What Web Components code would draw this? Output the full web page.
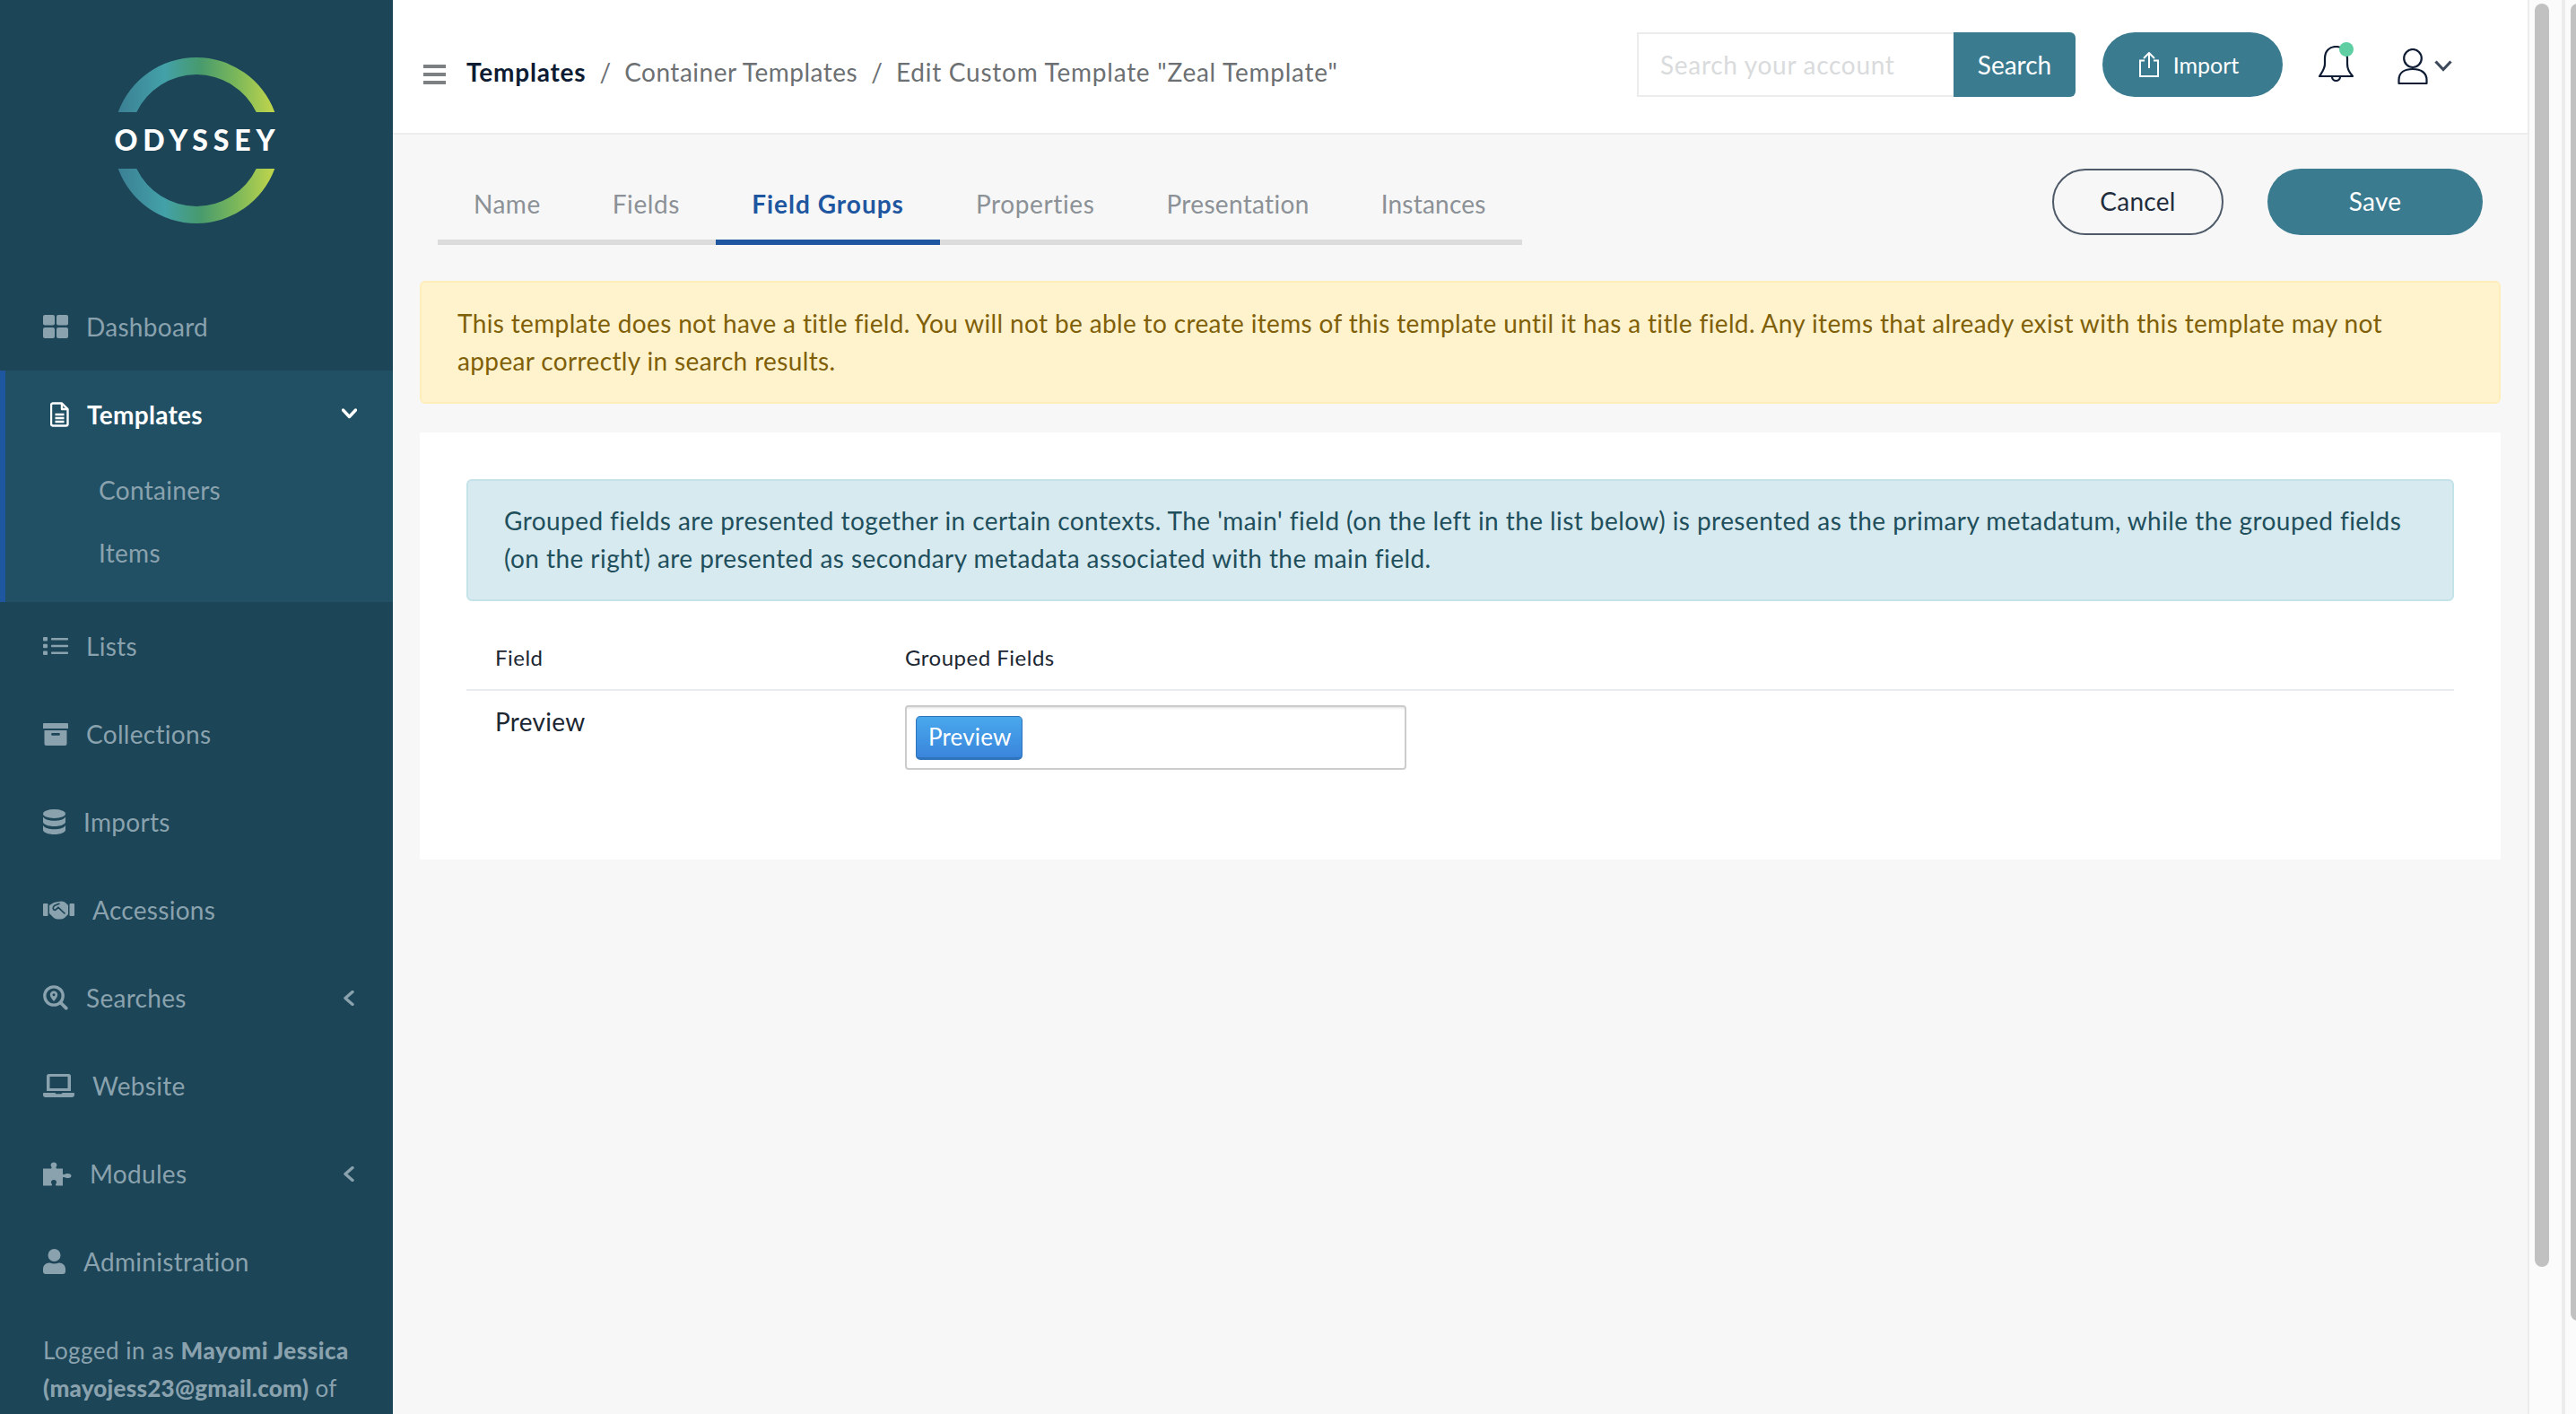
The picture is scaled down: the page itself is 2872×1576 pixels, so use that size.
<!DOCTYPE html>
<html>
<head>
<meta charset="utf-8">
<title>Odyssey</title>
<style>
    html, body{
        margin: 0;
        height: 100%;
        overflow: hidden;
        background: #f7f7f7;
        font-family: Lato, "Open Sans", sans-serif;
    }
    svg{ display: block; }
</style>
</head>
<body>
<app-shell>
    <side-bar slot="side">
        <nav-item>
            <svg slot="icon" width="28" height="26" viewBox="0 0 28 26" fill="currentColor"><rect width="13" height="11.500" rx="2"/><rect x="15" width="13" height="11.500" rx="2"/><rect y="14" width="13" height="12" rx="2"/><rect x="15" y="14" width="13" height="12" rx="2"/></svg>
            Dashboard
        </nav-item>
        <nav-group>
            <nav-item active caret="down">
                <svg slot="icon" style="margin-left:8px" width="21" height="28" viewBox="0 0 21 28" fill="none" stroke="currentColor" stroke-width="2.400" stroke-linejoin="round"><path d="M3 1.500h10l6.500 6.500v16.500a2 2 0 0 1-2 2H3a2 2 0 0 1-2-2v-21a2 2 0 0 1 2-2z"/><path d="M13 1.500v6.500h6.500M5.500 14h10M5.500 18h10M5.500 22h10"/></svg>
                Templates
            </nav-item>
            <sub-item>Containers</sub-item>
            <sub-item>Items</sub-item>
        </nav-group>
        <nav-item>
            <svg slot="icon" width="28" height="22" viewBox="0 0 28 22" fill="currentColor"><rect y="1" width="5" height="4.500" rx="1"/><rect y="8.700" width="5" height="4.500" rx="1"/><rect y="16.500" width="5" height="4.500" rx="1"/><rect x="9" y="2" width="19" height="2.600" rx=".8"/><rect x="9" y="9.700" width="19" height="2.600" rx=".8"/><rect x="9" y="17.500" width="19" height="2.600" rx=".8"/></svg>
            Lists
        </nav-item>
        <nav-item>
            <svg slot="icon" width="28" height="25" viewBox="0 0 28 25" fill="currentColor"><path d="M1 0h26a1 1 0 0 1 1 1v5H0V1a1 1 0 0 1 1-1z"/><path fill-rule="evenodd" d="M1.500 8h25v15a2 2 0 0 1-2 2h-21a2 2 0 0 1-2-2zM10.500 11a1 1 0 0 0 0 2.800h7a1 1 0 0 0 0-2.800z"/></svg>
            Collections
        </nav-item>
        <nav-item>
            <svg slot="icon" width="25" height="28" viewBox="0 0 25 28" fill="currentColor"><ellipse cx="12.500" cy="5" rx="12.500" ry="5"/><path d="M0 8.500c2 3 7 4.300 12.500 4.300S23 11.500 25 8.500V14c0 2.800-5.600 5-12.500 5S0 16.800 0 14z"/><path d="M0 18c2 3 7 4.300 12.500 4.300S23 21 25 18v5c0 2.800-5.600 5-12.500 5S0 25.800 0 23z"/></svg>
            Imports
        </nav-item>
        <nav-item>
            <svg slot="icon" width="35" height="21" viewBox="0 0 35 21" fill="currentColor"><rect y="3" width="5.500" height="14" rx="1"/><rect x="29.500" y="3" width="5.500" height="14" rx="1"/><path d="M7 5 12 2 17 1C20 0 24 0 27 4L28 5V15L24 19C21 21 15 21 12 19L7 14Z"/><path d="M18.500 3 12.500 5.500C10.500 7.500 11 10.500 13.500 10.500L17 7.500 24.500 14.500" fill="none" stroke="#1c4557" stroke-width="1.700"/></svg>
            Accessions
        </nav-item>
        <nav-item caret="left">
            <svg slot="icon" width="28" height="28" viewBox="0 0 28 28" fill="none" stroke="currentColor"><circle cx="12" cy="12" r="10.200" stroke-width="3.300"/><path fill="currentColor" stroke="none" fill-rule="evenodd" d="M12 18C9 14.500 7.800 12.800 7.800 10.800a4.200 4.200 0 0 1 8.400 0C16.200 12.800 15 14.500 12 18zM12 9.300a1.500 1.500 0 1 0 0 3 1.500 1.500 0 0 0 0-3z"/><path d="M20 20 25.700 25.700" stroke-width="3.800" stroke-linecap="round"/></svg>
            Searches
        </nav-item>
        <nav-item>
            <svg slot="icon" width="35" height="28" viewBox="0 0 35 28" fill="currentColor"><path fill-rule="evenodd" d="M6.500 1h22a2.500 2.500 0 0 1 2.500 2.500V20H4V3.500A2.500 2.500 0 0 1 6.500 1zM7.500 4v13h20V4z"/><path d="M.8 22h12.700c.3.800 1 1.300 1.800 1.300h4.400c.8 0 1.500-.5 1.800-1.300h12.700c.4 0 .8.400.8.800v1.500c0 1.500-1.200 2.700-2.800 2.700H2.800A2.800 2.800 0 0 1 0 24.300v-1.500c0-.4.400-.8.800-.8z"/></svg>
            Website
        </nav-item>
        <nav-item caret="left">
            <svg slot="icon" width="32" height="28" viewBox="0 0 32 28" fill="currentColor"><path d="M0 8.500h8.500c1.300 0 1.300-1.400.6-2.300-1-1.300-.6-4.700 2.900-4.700s3.900 3.400 2.900 4.700c-.7.900-.7 2.300.6 2.300H22v5.500c0 1 1.300 1.300 2.200.7 1.700-1.200 7.300-1.200 7.300 1.800s-5.600 3-7.300 1.800c-.9-.6-2.200-.3-2.200.7v8.500h-7c-1.400 0-1.200-1.400-.5-2.200 1.100-1.300.6-4.300-2.500-4.300s-3.600 3-2.500 4.300c.7.800.9 2.200-.5 2.200H0z"/></svg>
            Modules
        </nav-item>
        <nav-item>
            <svg slot="icon" width="25" height="28" viewBox="0 0 25 28" fill="currentColor"><circle cx="12.500" cy="7" r="7"/><path d="M7.500 15.500c3 1.300 7 1.300 10 0h.5c4 0 7 3 7 7V25a3 3 0 0 1-3 3H3a3 3 0 0 1-3-3v-2.500c0-4 3-7 7-7z"/></svg>
            Administration
        </nav-item>
        <user-note>Logged in as <b>Mayomi Jessica</b><br><b style="letter-spacing:.24px">(mayojess23@gmail.com)</b> of</user-note>
    </side-bar>

    <top-bar slot="top">
        <span slot="crumb-main">Templates</span>
        <span slot="crumb-a">Container Templates</span>
        <span slot="crumb-b">Edit Custom Template "Zeal Template"</span>
    </top-bar>

    <div slot="main" style="display:flex;flex-direction:column">
        <action-row>
            <tab-item style="letter-spacing:.5px">Name</tab-item>
            <tab-item>Fields</tab-item>
            <tab-item active>Field Groups</tab-item>
            <tab-item>Properties</tab-item>
            <tab-item style="letter-spacing:.32px">Presentation</tab-item>
            <tab-item style="letter-spacing:.22px">Instances</tab-item>
        </action-row>
        <alert-box kind="warning">This template does not have a title field. You will not be able to create items of this template until it has a title field. Any items that already exist with this template may not<br>appear correctly in search results.</alert-box>
        <group-card>
            <alert-box kind="info">Grouped fields are presented together in certain contexts. The 'main' field (on the left in the list below) is presented as the primary metadatum, while the grouped fields<br>(on the right) are presented as secondary metadata associated with the main field.</alert-box>
            <group-table>
                <span slot="field">Preview</span>
                <tag-chip slot="grouped">Preview</tag-chip>
            </group-table>
        </group-card>
    </div>
</app-shell>

<script>
// small helper so every element below reads the same
function makeTemplate(html){
    const t = document.createElement('template');
    t.innerHTML = html;
    return t;
}

function register(name, html){
    const tpl = makeTemplate(html);
    class Comp extends HTMLElement{
        constructor(){
            super();
            this.attachShadow({ mode: 'open' });
            this.shadowRoot.appendChild(tpl.content.cloneNode(true));
        }
    }
    window.customElements.define(name, Comp);
}

register('app-shell', `
    <style>
        :host{ display: flex; width: 2872px; height: 1576px; overflow: hidden; }
        .side{ width: 438px; flex: none; }
        .page{ flex: 1; min-width: 0; display: flex; flex-direction: column; background: #f7f7f7; }
        .bars{ width: 54px; flex: none; display: flex; background: #fbfbfb; }
        .bar{ flex: 1; border-left: 2px solid #ececec; padding: 4px 6px 0; }
        .bar:first-child{ padding-bottom: 164px; width: 26px; flex: none; box-sizing: content-box; padding-left: 6px; padding-right: 4px; }
        .bar:last-child{ border-left-width: 4px; padding: 4px 0 104px 6px; }
        .thumb{ height: 100%; background: #c1c1c1; border-radius: 8px; width: 16px; box-sizing: border-box; }
        .wrap{ display: flex; flex-direction: column; height: 1576px; box-sizing: border-box; }
    </style>
    <div class="side"><slot name="side"></slot></div>
    <div class="page">
        <slot name="top"></slot>
        <slot name="main"></slot>
    </div>
    <div class="bars">
        <div class="bar"><div class="wrap" style="height:1408px"><div class="thumb"></div></div></div>
        <div class="bar"><div class="wrap" style="height:1468px"><div class="thumb"></div></div></div>
    </div>
`);

register('side-bar', `
    <style>
        :host{ display: block; height: 1576px; overflow: hidden; background: #1c4557; font-family: Lato, sans-serif; }
        .logo{ height: 315px; display: flex; justify-content: center; padding-top: 60px; box-sizing: border-box; }
    </style>
    <div class="logo">
        <svg width="200" height="194" viewBox="0 0 200 194" style="overflow:visible">
            <defs>
                <linearGradient id="ring" x1="12" x2="188" y1="0" y2="0" gradientUnits="userSpaceOnUse">
                    <stop offset="0" stop-color="#3b7f94"/>
                    <stop offset=".3" stop-color="#43a1a8"/>
                    <stop offset=".52" stop-color="#479a6e"/>
                    <stop offset=".75" stop-color="#7ab75a"/>
                    <stop offset="1" stop-color="#c3d64b"/>
                </linearGradient>
            </defs>
            <path fill="url(#ring)" d="M12.700 65A93 93 0 0 1 187.300 65H166.700A74 74 0 0 0 33.300 65Z"/>
            <path fill="url(#ring)" d="M12.700 128A93 93 0 0 0 187.300 128H166.700A74 74 0 0 1 33.300 128Z"/>
            <text x="101" y="107.500" text-anchor="middle" fill="#fff" font-family="Lato, sans-serif" font-weight="900" font-size="32" letter-spacing="5.900">ODYSSEY</text>
        </svg>
    </div>
    <slot></slot>
`);

class NavItem extends HTMLElement{
    constructor(){
        super();
        this.attachShadow({ mode: 'open' });
        this.shadowRoot.innerHTML = `
            <style>
                :host{ display: flex; align-items: center; height: 98px; padding: 0 40px 0 48px; color: #8aa2ae; font-size: 28px; letter-spacing: .3px; box-sizing: border-box; }
                :host([active]){ color: #fff; font-weight: 700; padding-left: 42px; }
                .label{ flex: 1; margin-left: 20px; }
            </style>
            <slot name="icon"></slot>
            <span class="label"><slot></slot></span>
        `;
        const caret = this.getAttribute('caret');
        if(caret){
            const points = caret === 'down' ? '1.500,3 8.500,10.500 15.500,3' : '12,1.500 4,8.500 12,15.500';
            const holder = document.createElement('span');
            holder.innerHTML = `<svg viewBox="0 0 17 17" fill="none" stroke="${caret === 'down' ? '#fff' : '#8aa2ae'}" stroke-width="3.400" stroke-linecap="round" stroke-linejoin="round" style="display:block;width:17px;height:17px"><polyline points="${points}"/></svg>`;
            this.shadowRoot.appendChild(holder);
        }
    }
}
window.customElements.define('nav-item', NavItem);

register('nav-group', `
    <style>
        :host{ display: block; height: 258px; background: #215064; border-left: 6px solid #1f56a0; box-sizing: border-box; }
    </style>
    <slot></slot>
`);

register('sub-item', `
    <style>
        :host{ display: flex; align-items: center; height: 70px; padding-left: 104px; color: #8aa2ae; font-size: 28px; letter-spacing: .3px; }
    </style>
    <slot></slot>
`);

register('user-note', `
    <style>
        :host{ display: block; padding: 29px 20px 0 48px; color: #8aa2ae; font-size: 26px; line-height: 42px; letter-spacing: .5px; white-space: nowrap; }
        ::slotted(b){ font-weight: 900; }
    </style>
    <slot></slot>
`);

register('top-bar', `
    <style>
        :host{ display: flex; align-items: center; height: 150px; box-sizing: border-box; flex: none; background: #fff; border-bottom: 2px solid #ededed; font-size: 28px; padding: 0 0 2px 34px; }
        .menu{ margin: 20px 23px 0 0; }
        .crumbs{ flex: 1; color: #6c7073; white-space: nowrap; margin-top: 14px; }
        .main{ color: #0d1b33; font-weight: 700; letter-spacing: .8px; }
        .a{ letter-spacing: .5px; }
        .b{ letter-spacing: .76px; }
        .sep{ margin: 0 15px; }
        .search{ display: flex; height: 72px; margin-top: -2px; }
        .field{ width: 353px; box-sizing: border-box; border: 2px solid #ececec; border-right: 0; color: #d9dbdd; padding-left: 24px; display: flex; align-items: center; letter-spacing: .7px; }
        .go{ width: 136px; background: #3b7b8f; color: #fff; display: flex; align-items: center; justify-content: center; border-radius: 0 6px 6px 0; }
        .import{ display: flex; align-items: center; justify-content: center; gap: 16px; width: 201px; height: 72px; box-sizing: border-box; padding-right: 8px; margin: -2px 40px 0 30px; background: #3b7b8f; border-radius: 36px; color: #fff; font-size: 25px; }
        .bell{ margin: 3px 0 0 0; position: relative; }
        .dot{ position: absolute; top: -4px; left: 23px; width: 16px; height: 16px; border-radius: 50%; background: #5fcfa3; }
        .user{ display: flex; align-items: center; margin: 3px 84px 0 48px; gap: 7px; }
        .chev{ margin-top: -2px; }
    </style>
    <svg class="menu" width="25" height="22" viewBox="0 0 25 22" fill="#7d8083"><rect width="25" height="4" y="0"/><rect width="25" height="4" y="9"/><rect width="25" height="4" y="18"/></svg>
    <div class="crumbs"><span class="main"><slot name="crumb-main"></slot></span><span class="sep">/</span><span class="a"><slot name="crumb-a"></slot></span><span class="sep">/</span><span class="b"><slot name="crumb-b"></slot></span></div>
    <div class="search">
        <div class="field">Search your account</div>
        <div class="go">Search</div>
    </div>
    <div class="import">
        <svg width="22" height="28" viewBox="0 0 22 28" fill="none" stroke="#fff" stroke-width="2"><path d="M6 9.500H1V27h20V9.500h-5"/><path d="M11 18V1.500M5 7l6-6 6 6"/></svg>
        <span>Import</span>
    </div>
    <div class="bell">
        <svg width="40" height="41" viewBox="0 0 40 41" fill="none" stroke="#0d1b33" stroke-width="2.200" stroke-linejoin="round"><path d="M1 34H38C34 29 32 26 32 20V14C32 6 27 1 19.500 1 12 1 7 6 7 14V20C7 26 4 29 1 34Z"/><path d="M15 34.500a4.500 4.500 0 0 0 9 0"/></svg>
        <div class="dot"></div>
    </div>
    <div class="user">
        <svg width="34" height="41" viewBox="0 0 34 41" fill="none" stroke="#0d1b33" stroke-width="2.200" stroke-linejoin="round"><ellipse cx="17" cy="11" rx="9.800" ry="10"/><path d="M1.500 39V35C1.500 27 8 23 17 23S32.500 27 32.500 35V39Z"/></svg>
        <svg class="chev" width="20" height="13" viewBox="0 0 20 13" fill="none" stroke="#3e4a5c" stroke-width="3.200"><path d="M1.500 1.500 10 10.500l8.500-9"/></svg>
    </div>
`);

register('action-row', `
    <style>
        :host{ display: flex; align-items: flex-start; padding: 38px 50px 0 50px; height: 163px; box-sizing: border-box; flex: none; }
        .tabs{ display: flex; flex: 1; }
        .tabline{ display: flex; border-bottom: 6px solid #dcdcdc; }
        .cancel, .save{ display: flex; align-items: center; justify-content: center; height: 74px; box-sizing: border-box; border-radius: 37px; font-size: 28px; padding-bottom: 3px; letter-spacing: .3px; }
        .cancel{ width: 191px; border: 2px solid #4e5a68; color: #1f2d3d; margin-right: 49px; }
        .save{ width: 240px; background: #3b7b8f; color: #fff; }
    </style>
    <div class="tabs"><div class="tabline"><slot></slot></div></div>
    <div class="cancel">Cancel</div>
    <div class="save">Save</div>
`);

register('tab-item', `
    <style>
        :host{ display: block; height: 85px; padding: 8px 40px 0; box-sizing: border-box; margin-bottom: -6px; color: #8b9196; font-size: 28px; line-height: 62px; letter-spacing: .62px; border-bottom: 6px solid transparent; }
        :host([active]){ color: #1f56a0; font-weight: 700; border-bottom-color: #1f56a0; letter-spacing: 1px; }
    </style>
    <slot></slot>
`);

class AlertBox extends HTMLElement{
    constructor(){
        super();
        this.attachShadow({ mode: 'open' });
        this.shadowRoot.innerHTML = `
            <style>
                :host{ display: block; box-sizing: border-box; border: 2px solid; border-radius: 6px; font-size: 28px; line-height: 42px; white-space: nowrap; padding: 24px 40px 24px 40px; }
                :host([kind=warning]){ margin: 0 30px; background: #fff3cd; border-color: #ffeeba; color: #7f6008; height: 137px; letter-spacing: .36px; }
                :host([kind=info]){ background: #d6eaef; border-color: #c3e3e9; color: #1f4f5c; height: 136px; letter-spacing: .43px; padding-top: 23px; }
            </style>
            <slot></slot>
        `;
    }
}
window.customElements.define('alert-box', AlertBox);

register('group-card', `
    <style>
        :host{ display: block; margin: 32px 30px 0; background: #fff; height: 476px; box-sizing: border-box; padding: 52px 52px 0; border-radius: 2px; }
    </style>
    <slot></slot>
`);

register('group-table', `
    <style>
        :host{ display: block; color: #1c2733; }
        .row{ display: grid; grid-template-columns: 457px 1fr; padding-left: 32px; }
        .head{ height: 100px; padding-top: 26px; align-items: center; border-bottom: 2px solid #e9ecef; font-size: 24px; box-sizing: border-box; letter-spacing: .5px; }
        .body{ padding-top: 16px; font-size: 28px; letter-spacing: .3px; }
        .body .name{ line-height: 36px; }
        .box{ width: 559px; height: 72px; box-sizing: border-box; border: 2px solid #ccc; border-radius: 4px; box-shadow: inset 0 3px 3px -2px #ddd; padding: 10px; }
    </style>
    <div class="row head"><span>Field</span><span>Grouped Fields</span></div>
    <div class="row body">
        <span class="name"><slot name="field"></slot></span>
        <div class="box"><slot name="grouped"></slot></div>
    </div>
`);

register('tag-chip', `
    <style>
        :host{ display: inline-block; height: 49px; line-height: 45px; box-sizing: border-box; padding: 0 12px 0 13px; color: #fff; font-size: 26px; letter-spacing: .15px; background: linear-gradient(#49a8ec, #3a85dc); border: 1px solid #2f74ba; border-bottom-width: 3px; border-radius: 5px; }
    </style>
    <slot></slot>
`);
</script>
</body>
</html>
